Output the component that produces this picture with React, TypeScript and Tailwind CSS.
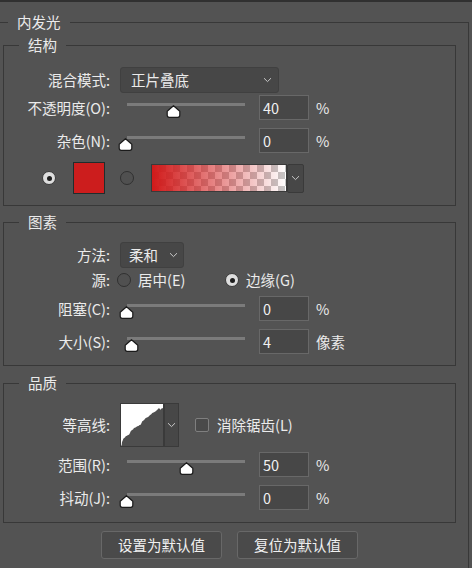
import React from "react";

const Chevron = () => (
  <svg width="9" height="6" viewBox="0 0 9 6">
    <path d="M1 1.2 L4.5 4.6 L8 1.2" fill="none" stroke="#c8c8c8" strokeWidth="1" />
  </svg>
);

const Thumb = () => (
  <svg width="15" height="13" viewBox="0 0 15 13">
    <path
      d="M7.5 0.7 L13.8 6.2 V10.3 Q13.8 12.3 11.8 12.3 H3.2 Q1.2 12.3 1.2 10.3 V6.2 Z"
      fill="#ffffff"
      stroke="#1b1b1b"
      strokeWidth="1.2"
      strokeLinejoin="round"
    />
  </svg>
);

const RadioOn = ({ className = "" }: { className?: string }) => (
  <div
    className={
      "w-[14px] h-[14px] shrink-0 rounded-full bg-[#dedede] border border-[#3a3a3a] flex items-center justify-center " +
      className
    }
  >
    <div className="w-[5px] h-[5px] rounded-full bg-[#1e1e1e]" />
  </div>
);

const RadioOff = ({ className = "" }: { className?: string }) => (
  <div
    className={
      "w-[14px] h-[14px] shrink-0 rounded-full border-[1.5px] border-[#303030] bg-[#505050] " + className
    }
  />
);

function Slider({ pos }: { pos: number }) {
  return (
    <div className="relative w-[132px] h-full shrink-0">
      <div className="absolute left-[7px] top-[8px] w-[118px] h-[3px] bg-[#7b7b7b]" />
      <div className="absolute top-[10px] flex" style={{ left: 7 + pos - 7.5 }}>
        <Thumb />
      </div>
    </div>
  );
}

function Row({
  label,
  className,
  children,
}: {
  label: string;
  className: string;
  children: React.ReactNode;
}) {
  return (
    <div className={"flex items-center " + className}>
      <div className="w-[106px] shrink-0 text-right whitespace-nowrap">{label}</div>
      <div className="ml-[10px] flex items-center h-full">{children}</div>
    </div>
  );
}

function SliderRow({
  label,
  pos,
  value,
  unit,
  className,
}: {
  label: string;
  pos: number;
  value: string;
  unit: string;
  className: string;
}) {
  return (
    <Row label={label} className={"h-[25px] " + className}>
      <Slider pos={pos} />
      <div className="ml-[7px] w-[50px] h-[25px] shrink-0 border border-[#686868] bg-[#474747] pl-[3px] flex items-center text-[#f0f0f0]">
        {value}
      </div>
      <div className="ml-[7px] whitespace-nowrap">{unit}</div>
    </Row>
  );
}

export default function App() {
  return (
    <div className="w-[472px] h-[568px] overflow-hidden bg-[#535353] border-t-2 border-[#303030] text-[#ebebeb] text-[14.5px] leading-[20px] font-['Noto_Sans_CJK_SC','Noto_Sans',sans-serif]">
      <fieldset className="-ml-px mt-[10px] w-[470px] border border-[#383838] pb-[30px]">
        <legend className="ml-[8px] px-[9px] leading-[20px]">内发光</legend>

        {/* 结构 */}
        <fieldset className="ml-[3px] mt-[3px] w-[453px] border border-[#383838] pb-[11px]">
          <legend className="ml-[15px] px-[9px] leading-[20px]">结构</legend>

          <Row label="混合模式:" className="mt-[12px] h-[26px]">
            <div className="w-[159px] h-[26px] rounded-[3px] bg-[#474747] border border-[#404040] pl-[10px] pr-[6px] flex items-center justify-between">
              <span>正片叠底</span>
              <Chevron />
            </div>
          </Row>

          <SliderRow label="不透明度(O):" pos={46.5} value="40" unit="%" className="mt-[2px]" />
          <SliderRow label="杂色(N):" pos={-1.5} value="0" unit="%" className="mt-[8px]" />

          <div className="mt-[9px] h-[32px] flex items-center">
            <RadioOn className="ml-[38px]" />
            <div className="ml-[17px] w-[32px] h-[32px] shrink-0 bg-[#cc1d1d] border border-[#1f2d2d]" />
            <RadioOff className="ml-[15px]" />
            <div className="ml-[17px] w-[136px] h-[28px] shrink-0 border border-[#3a3a3a] bg-[repeating-conic-gradient(#c6c6c6_0%_25%,#ffffff_0%_50%)] bg-[length:14px_14px]">
              <div className="w-full h-full bg-linear-to-r from-[#d11a1a] to-[#d11a1a00]" />
            </div>
            <div className="w-[17px] h-[29px] shrink-0 rounded-[2px] bg-[#474747] border border-[#3a3a3a] flex items-center justify-center">
              <Chevron />
            </div>
          </div>
        </fieldset>

        {/* 图素 */}
        <fieldset className="ml-[3px] mt-[6px] w-[453px] border border-[#383838] pb-[11px]">
          <legend className="ml-[15px] px-[9px] leading-[20px]">图素</legend>

          <Row label="方法:" className="mt-[10px] h-[26px]">
            <div className="w-[64px] h-[26px] rounded-[3px] bg-[#474747] border border-[#404040] pl-[8px] pr-[5px] flex items-center justify-between">
              <span>柔和</span>
              <Chevron />
            </div>
          </Row>

          <Row label="源:" className="mt-[4px] h-[16px]">
            <div className="-ml-[3px] w-[108px] flex items-center">
              <RadioOff />
              <span className="ml-[7px] whitespace-nowrap">居中(E)</span>
            </div>
            <div className="flex items-center">
              <RadioOn />
              <span className="ml-[7px] whitespace-nowrap">边缘(G)</span>
            </div>
          </Row>

          <SliderRow label="阻塞(C):" pos={-1} value="0" unit="%" className="mt-[8px]" />
          <SliderRow label="大小(S):" pos={4} value="4" unit="像素" className="mt-[8px]" />
        </fieldset>

        {/* 品质 */}
        <fieldset className="ml-[3px] mt-[7px] w-[453px] border border-[#383838] pb-[12px]">
          <legend className="ml-[15px] px-[9px] leading-[20px]">品质</legend>

          <Row label="等高线:" className="mt-[10px] h-[44px]">
            <div className="w-[44px] h-[44px] shrink-0 border border-[#3a3a3a] bg-white">
              <svg width="42" height="42" viewBox="0 0 42 42" className="block">
                <path
                  d="M0 42 L0.7 41 L1 38 L1.5 37 L2.2 35 L3 34 L4 33.5 L4.7 32.3 L6 31.8 L7 31 L8 30.7 L9 29 L9.7 27.3 L11 26 L12 25.5 L13 24 L14.5 23.5 L16.3 22.3 L17.5 22 L18.5 21 L19.7 20.7 L20.5 19 L21.3 17.3 L22.5 16.5 L23.5 15.5 L24.7 14 L26 13.5 L27 13 L28 12.3 L29 11 L30 10.5 L31.3 9 L32.5 8.5 L33.5 8 L34.7 7.3 L35.5 6.5 L36.3 5.7 L37 5 L38 4 L38.8 5 L39.7 5.7 L40.5 4.5 L41.3 4 L42 4.5 L42 42 Z"
                  fill="#4f4f4f"
                />
              </svg>
            </div>
            <div className="w-[15px] h-[44px] shrink-0 bg-[#474747] border border-[#3a3a3a] flex items-center justify-center">
              <Chevron />
            </div>
            <div className="ml-[16px] w-[14px] h-[14px] shrink-0 rounded-[2px] border border-[#7f7f7f] bg-[#4a4a4a]" />
            <span className="ml-[8px] whitespace-nowrap">消除锯齿(L)</span>
          </Row>

          <SliderRow label="范围(R):" pos={59} value="50" unit="%" className="mt-[5px]" />
          <SliderRow label="抖动(J):" pos={-1} value="0" unit="%" className="mt-[8px]" />
        </fieldset>

        <div className="ml-[3px] w-[453px] mt-[8px] flex justify-center gap-[15px]">
          <button className="w-[121px] h-[28px] rounded-[3px] bg-[#4a4a4a] border border-[#686868] text-[#f0f0f0] text-[14.5px]">
            设置为默认值
          </button>
          <button className="w-[121px] h-[28px] rounded-[3px] bg-[#4a4a4a] border border-[#686868] text-[#f0f0f0] text-[14.5px]">
            复位为默认值
          </button>
        </div>
      </fieldset>
    </div>
  );
}
